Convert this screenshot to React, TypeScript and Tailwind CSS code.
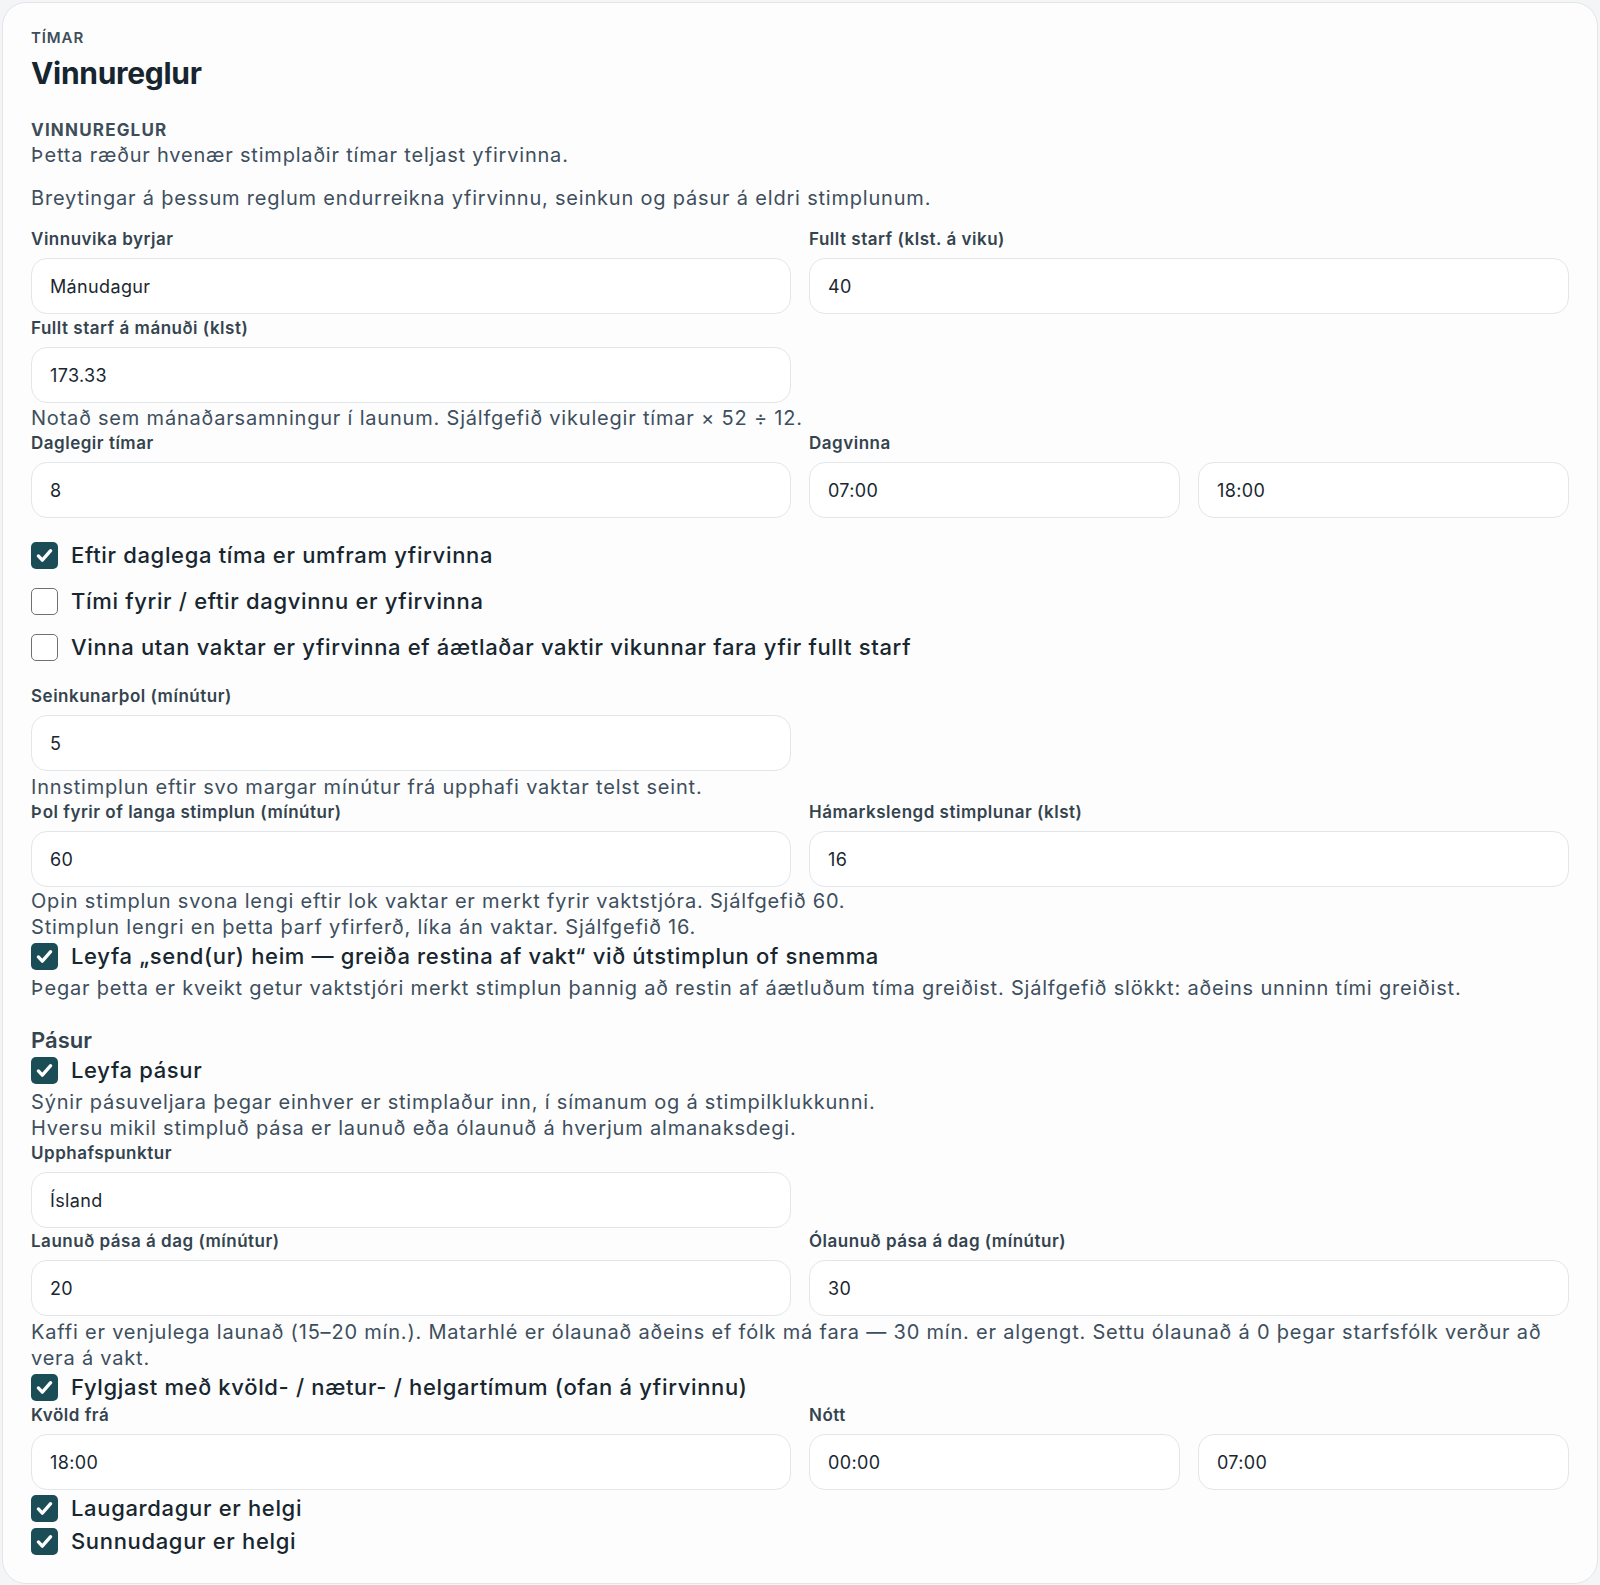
import type { ReactNode } from "react";

const font = { fontFamily: "Inter, 'Noto Sans', sans-serif" };

function Label({ children }: { children: ReactNode }) {
  return (
    <div className="mb-[7px] text-[17px] font-semibold leading-6 tracking-[0.03em] text-[#34444f]">
      {children}
    </div>
  );
}

function Input({ value }: { value: string }) {
  return (
    <div className="flex h-14 items-center rounded-2xl border border-[#e3e6e9] bg-white px-[18px] text-[18px] tracking-[0.02em] text-[#1a2730]">
      {value}
    </div>
  );
}

function Field({ label, value }: { label: string; value: string }) {
  return (
    <div>
      <Label>{label}</Label>
      <Input value={value} />
    </div>
  );
}

function Help({ children, className = "" }: { children: ReactNode; className?: string }) {
  return (
    <p className={`text-[20px] leading-[26px] tracking-[0.04em] text-[#3d4f5d] ${className}`}>{children}</p>
  );
}

function Check({ label, checked, className = "" }: { label: string; checked: boolean; className?: string }) {
  return (
    <label className={`flex h-8 items-center gap-[13px] ${className}`}>
      {checked ? (
        <span className="flex h-[27px] w-[27px] shrink-0 items-center justify-center rounded-[5px] bg-[#1b4d57]">
          <svg viewBox="0 0 24 24" className="h-[21px] w-[21px]" fill="none" stroke="white" strokeWidth={3.8} strokeLinecap="round" strokeLinejoin="round">
            <path d="M5 12.5l4.5 4.8L19 6.5" />
          </svg>
        </span>
      ) : (
        <span className="h-[27px] w-[27px] shrink-0 rounded-[5px] border-[1.5px] border-[#6b7378] bg-white" />
      )}
      <span className="text-[22px] font-medium tracking-[0.03em] text-[#17262f]">{label}</span>
    </label>
  );
}

export default function App() {
  return (
    <div className="min-h-[1585px] bg-[#f3f5f7] p-[2px]" style={font}>
      <div className="rounded-3xl border border-[#e3e6e9] bg-[#fdfdfd] px-[28px] pb-[26px] pt-[25px]">
        <div className="text-[15px] font-semibold uppercase leading-5 tracking-[0.06em] text-[#3d4d59]">Tímar</div>
        <h1 className="mt-[7px] text-[30px] font-bold leading-9 tracking-[-0.01em] text-[#16252e]">Vinnureglur</h1>

        <div className="mt-[29px] text-[17px] font-bold uppercase leading-5 tracking-[0.07em] text-[#3d4d59]">Vinnureglur</div>
        <Help className="mt-[2px]">Þetta ræður hvenær stimplaðir tímar teljast yfirvinna.</Help>
        <Help className="mt-[17px]">Breytingar á þessum reglum endurreikna yfirvinnu, seinkun og pásur á eldri stimplunum.</Help>

        <div className="mt-[16px] grid grid-cols-2 gap-x-[18px]">
          <Field label="Vinnuvika byrjar" value="Mánudagur" />
          <Field label="Fullt starf (klst. á viku)" value="40" />
        </div>
        <div className="mt-[2px] grid grid-cols-2 gap-x-[18px]">
          <Field label="Fullt starf á mánuði (klst)" value="173.33" />
        </div>
        <Help className="mt-[2px]">Notað sem mánaðarsamningur í launum. Sjálfgefið vikulegir tímar × 52 ÷ 12.</Help>
        <div className="grid grid-cols-2 gap-x-[18px]">
          <Field label="Daglegir tímar" value="8" />
          <div>
            <Label>Dagvinna</Label>
            <div className="grid grid-cols-2 gap-x-[18px]">
              <Input value="07:00" />
              <Input value="18:00" />
            </div>
          </div>
        </div>

        <div className="mt-[21px] flex flex-col gap-[14px]">
          <Check checked label="Eftir daglega tíma er umfram yfirvinna" />
          <Check checked={false} label="Tími fyrir / eftir dagvinnu er yfirvinna" />
          <Check checked={false} label="Vinna utan vaktar er yfirvinna ef áætlaðar vaktir vikunnar fara yfir fullt starf" />
        </div>

        <div className="mt-[21px] grid grid-cols-2 gap-x-[18px]">
          <Field label="Seinkunarþol (mínútur)" value="5" />
        </div>
        <Help className="mt-[3px]">Innstimplun eftir svo margar mínútur frá upphafi vaktar telst seint.</Help>
        <div className="grid grid-cols-2 gap-x-[18px]">
          <Field label="Þol fyrir of langa stimplun (mínútur)" value="60" />
          <Field label="Hámarkslengd stimplunar (klst)" value="16" />
        </div>
        <Help className="mt-[1px]">Opin stimplun svona lengi eftir lok vaktar er merkt fyrir vaktstjóra. Sjálfgefið 60.</Help>
        <Help>Stimplun lengri en þetta þarf yfirferð, líka án vaktar. Sjálfgefið 16.</Help>
        <Check checked label="Leyfa „send(ur) heim — greiða restina af vakt“ við útstimplun of snemma" />
        <Help className="mt-[3px]">
          Þegar þetta er kveikt getur vaktstjóri merkt stimplun þannig að restin af áætluðum tíma greiðist. Sjálfgefið slökkt: aðeins unninn tími greiðist.
        </Help>

        <h2 className="mt-[25px] text-[22px] font-semibold leading-7 text-[#34444f]">Pásur</h2>
        <Check checked label="Leyfa pásur" />
        <Help className="mt-[3px]">Sýnir pásuveljara þegar einhver er stimplaður inn, í símanum og á stimpilklukkunni.</Help>
        <Help>Hversu mikil stimpluð pása er launuð eða ólaunuð á hverjum almanaksdegi.</Help>
        <div className="grid grid-cols-2 gap-x-[18px]">
          <Field label="Upphafspunktur" value="Ísland" />
        </div>
        <div className="mt-[1px] grid grid-cols-2 gap-x-[18px]">
          <Field label="Launuð pása á dag (mínútur)" value="20" />
          <Field label="Ólaunuð pása á dag (mínútur)" value="30" />
        </div>
        <Help className="mt-[3px]">
          Kaffi er venjulega launað (15–20 mín.). Matarhlé er ólaunað aðeins ef fólk má fara — 30 mín. er algengt. Settu ólaunað á 0 þegar starfsfólk verður að vera á vakt.
        </Help>
        <Check checked label="Fylgjast með kvöld- / nætur- / helgartímum (ofan á yfirvinnu)" />
        <div className="grid grid-cols-2 gap-x-[18px]">
          <Field label="Kvöld frá" value="18:00" />
          <div>
            <Label>Nótt</Label>
            <div className="grid grid-cols-2 gap-x-[18px]">
              <Input value="00:00" />
              <Input value="07:00" />
            </div>
          </div>
        </div>
        <div className="mt-[2px] flex flex-col gap-[1px]">
          <Check checked label="Laugardagur er helgi" />
          <Check checked label="Sunnudagur er helgi" />
        </div>
      </div>
    </div>
  );
}
